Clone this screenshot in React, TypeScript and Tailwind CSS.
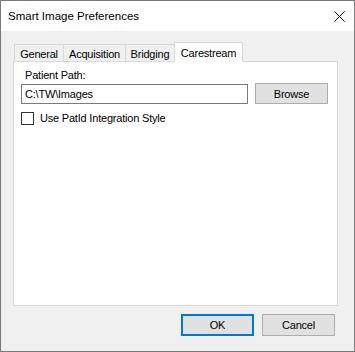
import React from "react";

const font = { fontFamily: '"Liberation Sans", Arial, sans-serif' };

function Tab({ label, width, active }: { label: string; width: string; active?: boolean }) {
  if (active) {
    return (
      <div
        className={`relative z-10 -ml-px flex h-[20px] items-start justify-center border border-b-0 border-[#d9d9d9] bg-white pt-[3px] ${width}`}
      >
        {label}
      </div>
    );
  }
  return (
    <div
      className={`-ml-px flex h-[18px] items-start justify-center border border-b-0 border-[#d9d9d9] bg-[#f0f0f0] pt-[2px] first:ml-0 ${width}`}
    >
      {label}
    </div>
  );
}

export default function App() {
  return (
    <div
      className="flex h-[352px] w-[355px] flex-col border border-[#7a7a7a] text-[11px] leading-[14px] tracking-[-0.2px] text-black"
      style={font}
    >
      <div className="flex h-[30px] shrink-0 items-center justify-between bg-white pl-[7px] pr-[9px]">
        <span className="text-[11.5px] tracking-normal">Smart Image Preferences</span>
        <svg width="11" height="11" viewBox="0 0 11 11" className="mt-[1px]">
          <path d="M0.5 0.5 L10.5 10.5 M10.5 0.5 L0.5 10.5" stroke="#111" strokeWidth="1" />
        </svg>
      </div>

      <div className="flex flex-1 flex-col bg-[#f0f0f0] pt-[11px]">
        <div className="ml-[13px] flex h-[20px] items-end">
          <Tab label="General" width="w-[50px]" />
          <Tab label="Acquisition" width="w-[63px]" />
          <Tab label="Bridging" width="w-[50px]" />
          <Tab label="Carestream" width="w-[69px]" active />
        </div>

        <div className="relative -mt-px ml-[12px] h-[245px] w-[325px] border border-[#d9d9d9] bg-white">
          <div className="ml-[11px] mt-[6px]">Patient Path:</div>
          <div className="mt-[1px] flex items-start">
            <div className="ml-[7px] mt-[1px] flex h-[20px] w-[227px] items-center border border-[#7a7a7a] pl-[3px]">
              C:\TW\Images
            </div>
            <div className="ml-[7px] flex h-[21px] w-[73px] items-center justify-center border border-[#adadad] bg-[#e1e1e1]">
              Browse
            </div>
          </div>
          <div className="ml-[7px] mt-[7px] flex items-center">
            <div className="h-[13px] w-[13px] border border-[#333] bg-white" />
            <span className="ml-[6px]">Use PatId Integration Style</span>
          </div>
        </div>

        <div className="mr-[19px] mt-[8px] flex justify-end gap-[8px]">
          <div className="flex h-[22px] w-[73px] items-center justify-center border-2 border-[#0078d7] bg-[#e1e1e1]">
            OK
          </div>
          <div className="flex h-[22px] w-[73px] items-center justify-center border border-[#adadad] bg-[#e1e1e1]">
            Cancel
          </div>
        </div>
      </div>
    </div>
  );
}
